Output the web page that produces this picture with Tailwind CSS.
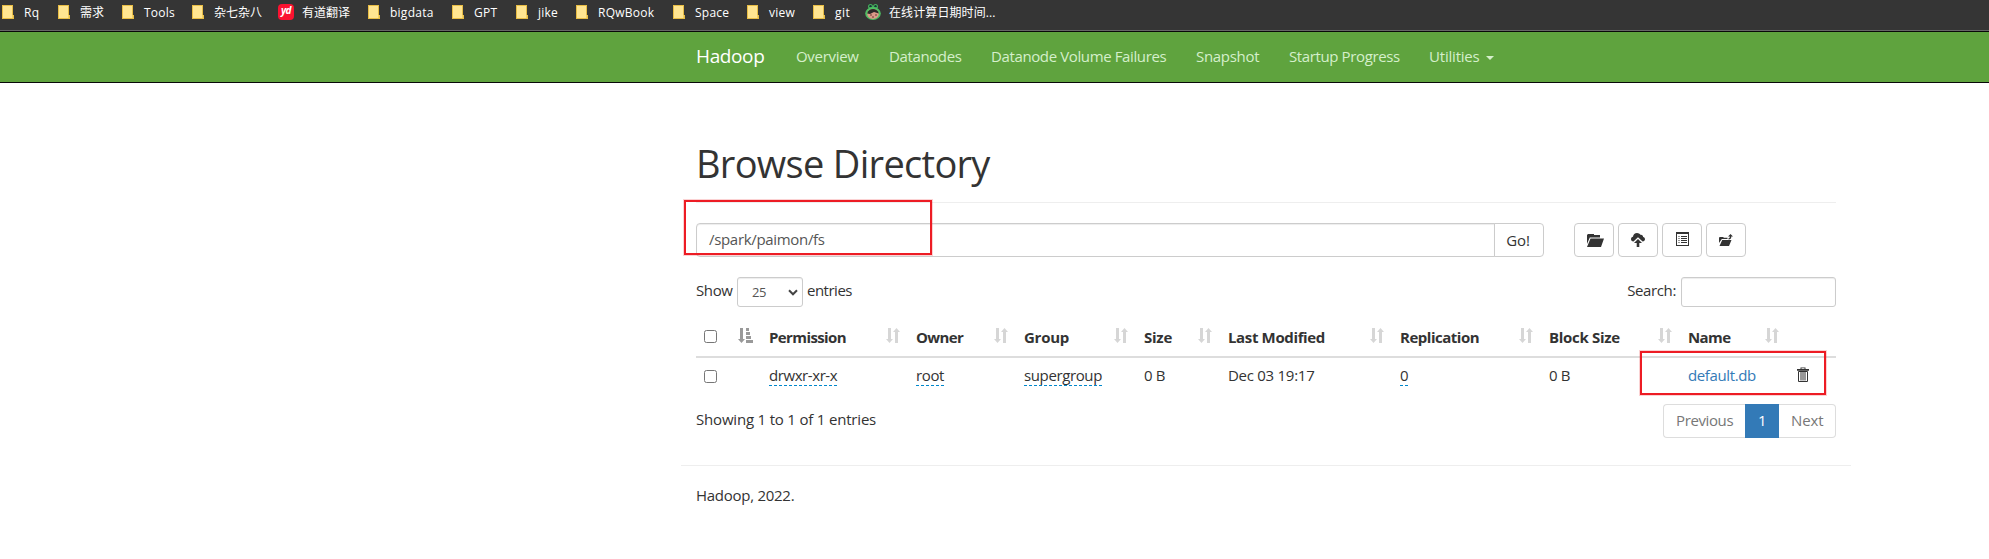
<!DOCTYPE html>
<html lang="en">
<head>
<meta charset="utf-8">
<title>Browsing HDFS</title>
<script src="https://cdn.jsdelivr.net/npm/@tailwindcss/browser@4"></script>
</head>
<body class="bg-white overflow-hidden font-['Open_Sans','Noto_Sans_CJK_SC',sans-serif] text-[15px] leading-[22px] tracking-[-0.38px] text-[#333]">
<svg width="0" height="0" class="absolute">
  <symbol id="folder" viewBox="0 0 12 14"><path d="M0 0h11v10h1v4H0z" fill="#e8bd45"/><path d="M1 1h9v9h1v3H1z" fill="#ffe591"/><path d="M10 10h1v3h-1z" fill="#f3cf62"/></symbol>
  <symbol id="sort" viewBox="0 0 14 15"><path d="M2 0h3v11h2L3.500 15 0 11h2zM9 15V4H7l3.500-4L14 4h-2v11z" fill="#d6d6d6"/></symbol>
</svg>

<!-- Bookmarks bar -->
<nav class="flex h-[31px] bg-[#353535] border-b border-[#666] text-white text-xs leading-[20px] tracking-[0.25px] whitespace-nowrap">
  <div class="flex w-[56px]"><svg class="w-3 h-3.5 mt-[5px] ml-0.5 mr-2.5 shrink-0"><use href="#folder"/></svg><span class="pt-[3px]">Rq</span></div>
  <div class="flex w-[64px]"><svg class="w-3 h-3.5 mt-[5px] ml-0.5 mr-2.5 shrink-0"><use href="#folder"/></svg><span class="pt-[3px] tracking-normal">需求</span></div>
  <div class="flex w-[70px]"><svg class="w-3 h-3.5 mt-[5px] ml-0.5 mr-2.5 shrink-0"><use href="#folder"/></svg><span class="pt-[3px]">Tools</span></div>
  <div class="flex w-[88px]"><svg class="w-3 h-3.5 mt-[5px] ml-0.5 mr-2.5 shrink-0"><use href="#folder"/></svg><span class="pt-[3px] tracking-normal">杂七杂八</span></div>
  <div class="flex w-[88px]"><span class="mt-1 mr-2 w-4 h-4 shrink-0 rounded-[4px] bg-[#fa1230] text-[10px] leading-[13px] font-bold italic tracking-[-0.5px] text-center">yd</span><span class="pt-[3px] tracking-normal">有道翻译</span></div>
  <div class="flex w-[84px]"><svg class="w-3 h-3.5 mt-[5px] ml-0.5 mr-2.5 shrink-0"><use href="#folder"/></svg><span class="pt-[3px]">bigdata</span></div>
  <div class="flex w-[64px]"><svg class="w-3 h-3.5 mt-[5px] ml-0.5 mr-2.5 shrink-0"><use href="#folder"/></svg><span class="pt-[3px]">GPT</span></div>
  <div class="flex w-[60px]"><svg class="w-3 h-3.5 mt-[5px] ml-0.5 mr-2.5 shrink-0"><use href="#folder"/></svg><span class="pt-[3px]">jike</span></div>
  <div class="flex w-[97px]"><svg class="w-3 h-3.5 mt-[5px] ml-0.5 mr-2.5 shrink-0"><use href="#folder"/></svg><span class="pt-[3px]">RQwBook</span></div>
  <div class="flex w-[74px]"><svg class="w-3 h-3.5 mt-[5px] ml-0.5 mr-2.5 shrink-0"><use href="#folder"/></svg><span class="pt-[3px]">Space</span></div>
  <div class="flex w-[66px]"><svg class="w-3 h-3.5 mt-[5px] ml-0.5 mr-2.5 shrink-0"><use href="#folder"/></svg><span class="pt-[3px]">view</span></div>
  <div class="flex w-[54px]"><svg class="w-3 h-3.5 mt-[5px] ml-0.5 mr-2.5 shrink-0"><use href="#folder"/></svg><span class="pt-[3px] tracking-[0.5px]">git</span></div>
  <div class="flex"><svg class="w-4 h-4 mt-1 mr-2 shrink-0" viewBox="0 0 16 16"><circle cx="5.500" cy="2.500" r="2.500" fill="#45b05c"/><circle cx="10.500" cy="2.500" r="2.500" fill="#45b05c"/><circle cx="5.500" cy="2.300" r="1.200" fill="#17343a"/><circle cx="10.500" cy="2.300" r="1.200" fill="#17343a"/><ellipse cx="8" cy="9.500" rx="7.800" ry="6.500" fill="#4fbf63"/><ellipse cx="8" cy="10" rx="5.800" ry="5" fill="#dc9a88"/><path d="M2.200 9.500C3 3.500 13 3.500 13.800 9.500L9 8l-4 2z" fill="#2b2928"/><path d="M5 11h2M10 11h2M7 13h2" stroke="#6b3a36"/></svg><span class="pt-[3px] tracking-[0.1px]">在线计算日期时间...</span></div>
</nav>

<!-- Hadoop navbar -->
<header class="h-[52px] bg-[#5fa33e] border-y border-[#080808] text-[#d5efcb]">
  <div class="flex ml-[696px] h-[50px] pt-[13px] whitespace-nowrap">
    <a class="w-[100px] text-[19px] leading-[22px] text-white">Hadoop</a>
    <a class="w-[93px] tracking-[-0.3px]">Overview</a>
    <a class="w-[102px]">Datanodes</a>
    <a class="w-[205px]">Datanode Volume Failures</a>
    <a class="w-[93px] tracking-[-0.3px]">Snapshot</a>
    <a class="w-[140px]">Startup Progress</a>
    <a class="flex tracking-[-0.2px]">Utilities<svg class="w-2 h-1 mt-[11px] ml-1.5" viewBox="0 0 8 4"><path d="M0 0h8L4 4z" fill="#d5efcb"/></svg></a>
  </div>
</header>

<main class="relative ml-[696px] w-[1140px] whitespace-nowrap">
  <h1 class="h-[119px] pt-[56px] text-[38px] leading-[48px] tracking-[-0.7px]">Browse Directory</h1>
  <hr class="border-[#eee]">

  <!-- Path and actions -->
  <div class="flex mt-[20px] h-[34px]">
    <div class="w-[799px] border border-[#ccc] rounded-l-[4px] pl-3 pt-1 text-[#555] tracking-[-0.32px] shadow-[inset_0_1px_1px_rgba(0,0,0,0.075)]">/spark/paimon/fs</div>
    <button class="w-[50px] -ml-px border border-[#ccc] rounded-r-[4px] pr-0.5 tracking-[-0.1px]">Go!</button>
    <div class="flex gap-1 ml-[30px]">
      <button class="w-10 h-[34px] border border-[#ccc] rounded-[4px] flex items-center justify-center"><svg class="w-[18px] h-[14px] ml-0.5" viewBox="0 0 18 14"><path d="M1 3V1.500h1V1h6v1h6v2.500H3.800L1 11zM4.500 5.500H18L15 14H1z" fill="#333"/></svg></button>
      <button class="w-10 h-[34px] border border-[#ccc] rounded-[4px] flex items-center justify-center"><svg class="w-[14px] h-[14px]" viewBox="0 0 14 14"><path d="M2.500 8.500C.8 8.200 0 7.300 0 6.200 0 5 .8 4 2 3.800 2.200 1.500 3.800 0 6 0c1.500 0 2.700.7 3.400 1.800 1.600-.3 2.700.7 2.700 2.200C13.300 4.200 14 5 14 6.200c0 1.200-.9 2.200-2.400 2.300L7 4.200z" fill="#333"/><path d="M7 6l4 4H8.300v4H5.700v-4H3z" fill="#333"/></svg></button>
      <button class="w-10 h-[34px] border border-[#ccc] rounded-[4px] flex items-center justify-center"><svg class="w-[13px] h-[14px] mb-0.5" viewBox="0 0 13 14"><path d="M0 0h13v14H0zM1 2v11h11V2z" fill="#333" fill-rule="evenodd"/><path d="M2.500 4.500h1m-1 2h1m-1 2h1m-1 2h1M5 4.500h6M5 6.500h6M5 8.500h6M5 10.500h6" stroke="#333" stroke-width="1.200"/></svg></button>
      <button class="w-10 h-[34px] border border-[#ccc] rounded-[4px] flex items-center justify-center"><svg class="w-[14px] h-[12px]" viewBox="0 0 14 12"><path d="M0 9V3.500L1 3h3l1 .8h3.500V5H2.800zM3.200 6H12.500L10 12H.5z" fill="#333"/><path d="M11.500 0L14 2.500h-1.700C12.300 5 11.500 5.300 9.500 5.500V4.300c1.200-.2 1.300-.6 1.300-1.800H9z" fill="#333"/></svg></button>
    </div>
  </div>

  <!-- Table controls -->
  <div class="flex mt-[20px] h-[35px]">
    <span class="pt-0.5 w-[41px]">Show</span>
    <div class="flex w-[66px] h-[30px] border border-[#ccc] rounded-[3px] pl-[14px] text-[13px] leading-[29px] text-[#555] shadow-[inset_0_1px_1px_rgba(0,0,0,0.075)]">25<svg class="ml-[22px] mt-[11px] w-[10px] h-[7px]" viewBox="0 0 10 7"><path d="M1 1.300l4 4 4-4" fill="none" stroke="#444" stroke-width="2"/></svg></div>
    <span class="pt-0.5 ml-1 tracking-[-0.5px]">entries</span>
    <span class="pt-0.5 ml-auto">Search:</span>
    <div class="w-[155px] h-[30px] ml-[5px] border border-[#ccc] rounded-[3px] shadow-[inset_0_1px_1px_rgba(0,0,0,0.075)]"></div>
  </div>

  <!-- Directory listing -->
  <div class="grid grid-cols-[65px_147px_108px_120px_84px_172px_149px_139px_107px_49px] h-[46px] pt-[14px] border-b-2 border-[#ddd] font-bold">
    <div class="flex justify-between px-2"><span class="mt-[4px] w-[13px] h-[13px] border border-[#767676] rounded-[2.500px]"></span><svg class="mt-0.5 w-[15px] h-[15px]" viewBox="0 0 15 15"><path d="M2 0h3v11h2L3.500 15 0 11h2zM8 0h3v3H8zM8 4h4v3H8zM8 8h5v3H8zM8 12h7v3H8z" fill="#999"/></svg></div>
    <div class="flex justify-between px-2 tracking-[-0.6px]">Permission<svg class="mt-0.5 w-[14px] h-[15px]"><use href="#sort"/></svg></div>
    <div class="flex justify-between px-2 tracking-[-0.6px]">Owner<svg class="mt-0.5 w-[14px] h-[15px]"><use href="#sort"/></svg></div>
    <div class="flex justify-between px-2 tracking-[-0.25px]">Group<svg class="mt-0.5 w-[14px] h-[15px]"><use href="#sort"/></svg></div>
    <div class="flex justify-between px-2 tracking-[-0.25px]">Size<svg class="mt-0.5 w-[14px] h-[15px]"><use href="#sort"/></svg></div>
    <div class="flex justify-between px-2 tracking-[-0.36px]">Last Modified<svg class="mt-0.5 w-[14px] h-[15px]"><use href="#sort"/></svg></div>
    <div class="flex justify-between px-2 tracking-[-0.48px]">Replication<svg class="mt-0.5 w-[14px] h-[15px]"><use href="#sort"/></svg></div>
    <div class="flex justify-between px-2 tracking-[-0.3px]">Block Size<svg class="mt-0.5 w-[14px] h-[15px]"><use href="#sort"/></svg></div>
    <div class="flex justify-between px-2 tracking-[-0.6px]">Name<svg class="mt-0.5 w-[14px] h-[15px]"><use href="#sort"/></svg></div>
    <div></div>
  </div>
  <div class="grid grid-cols-[65px_147px_108px_120px_84px_172px_149px_139px_107px_49px] h-[46px] pt-[6px]">
    <div class="px-2"><span class="mt-[6px] block w-[13px] h-[13px] border border-[#767676] rounded-[2.500px]"></span></div>
    <div class="px-2 tracking-[-0.42px]"><span class="inline-block h-[22px] border-b border-dashed border-[#08c]">drwxr-xr-x</span></div>
    <div class="px-2"><span class="inline-block h-[22px] border-b border-dashed border-[#08c]">root</span></div>
    <div class="px-2"><span class="inline-block h-[22px] border-b border-dashed border-[#08c]">supergroup</span></div>
    <div class="px-2">0 B</div>
    <div class="px-2 tracking-[-0.27px]">Dec 03 19:17</div>
    <div class="px-2"><span class="inline-block h-[22px] border-b border-dashed border-[#08c]">0</span></div>
    <div class="px-2">0 B</div>
    <div class="px-2 text-[#337ab7]">default.db</div>
    <div class="pl-[10px]"><svg class="mt-[3px] w-3 h-[15px]" viewBox="0 0 12 15"><path d="M0 2h3.500V.5h5V2H12v1.800H0zM4.500 1.300V2h3v-.7z" fill="#333" fill-rule="evenodd"/><path d="M1.500 4.500h9v10h-9zM4 4.500v9M6 4.500v9M8 4.500v9" fill="none" stroke="#333"/></svg></div>
  </div>

  <!-- Summary and paging -->
  <div class="flex justify-between h-[34px]">
    <span class="pt-[4px] tracking-[-0.19px]">Showing 1 to 1 of 1 entries</span>
    <div class="flex h-[34px] text-[#777] leading-[31px]">
      <span class="w-[82px] border border-r-0 border-[#ddd] rounded-l-[4px] pl-[12px]">Previous</span>
      <span class="w-[34px] h-[34px] bg-[#337ab7] text-white text-center leading-[33px]">1</span>
      <span class="w-[57px] border border-l-0 border-[#ddd] rounded-r-[4px] pl-[12px] tracking-[-0.1px]">Next</span>
    </div>
  </div>

  <footer class="-mx-[15px] mt-[27px] px-[15px] pt-[18px] border-t border-[#eee] tracking-[-0.27px]">Hadoop, 2022.</footer>

  <!-- Highlight frames -->
  <div class="absolute -left-3 top-[117px] w-[248px] h-[55px] border-2 border-[#ed1c24] ring-1 ring-[#ed1c24]/20"></div>
  <div class="absolute left-[944px] top-[268px] w-[186px] h-[44px] border-2 border-[#ed1c24] ring-1 ring-[#ed1c24]/20"></div>
</main>
</body>
</html>
